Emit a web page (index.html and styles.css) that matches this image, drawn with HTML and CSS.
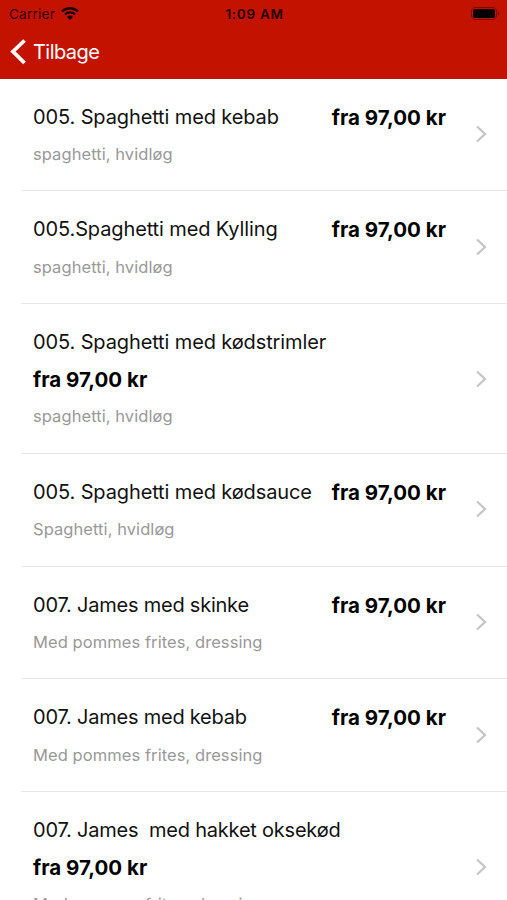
FILE: index.html
```html
<!DOCTYPE html>
<html lang="da">
<head>
<meta charset="utf-8">
<title>Menu</title>
<link rel="stylesheet" href="styles.css">
</head>
<body>
<header class="header">
  <div class="status">
    <div class="status-left"><span class="carrier">Carrier</span>
      <svg class="wifi" width="18" height="14" viewBox="0 0 18 14"><path d="M1 4.500a11.500 11.500 0 0 1 16 0" /><path d="M3.900 7.500a7.300 7.300 0 0 1 10.200 0"/><path class="solid" d="M9 13L6 9.900a4.400 4.400 0 0 1 6 0z"/></svg>
    </div>
    <span class="time">1:09 AM</span>
    <svg class="battery" width="29" height="13" viewBox="0 0 29 13"><rect class="shell" x=".5" y=".5" width="25" height="12" rx="3.500"/><rect x="2" y="2" width="22" height="9" rx="2"/><path class="tip" d="M27 4.500c2 .8 2 3.200 0 4z"/></svg>
  </div>
  <nav class="nav">
    <svg class="back" width="16" height="26" viewBox="0 0 16 26"><path d="M14.500 1.500L3 12.500l11.500 11.500"/></svg>
    <span class="back-label">Tilbage</span>
  </nav>
</header>
<main class="list">
  <article class="item"><div class="info"><div class="row"><h2>005. Spaghetti med kebab</h2><b class="price">fra 97,00 kr</b></div><p>spaghetti, hvidløg</p></div><svg class="chevron" viewBox="0 0 12 18"><path d="M2 1.500l8 7.500-8 7.500"/></svg></article>
  <article class="item"><div class="info"><div class="row"><h2>005.Spaghetti med Kylling</h2><b class="price">fra 97,00 kr</b></div><p>spaghetti, hvidløg</p></div><svg class="chevron" viewBox="0 0 12 18"><path d="M2 1.500l8 7.500-8 7.500"/></svg></article>
  <article class="item tall"><div class="info"><h2>005. Spaghetti med kødstrimler</h2><b class="price">fra 97,00 kr</b><p>spaghetti, hvidløg</p></div><svg class="chevron" viewBox="0 0 12 18"><path d="M2 1.500l8 7.500-8 7.500"/></svg></article>
  <article class="item"><div class="info"><div class="row"><h2>005. Spaghetti med kødsauce</h2><b class="price">fra 97,00 kr</b></div><p>Spaghetti, hvidløg</p></div><svg class="chevron" viewBox="0 0 12 18"><path d="M2 1.500l8 7.500-8 7.500"/></svg></article>
  <article class="item"><div class="info"><div class="row"><h2 class="snug">007. James med skinke</h2><b class="price">fra 97,00 kr</b></div><p>Med pommes frites, dressing</p></div><svg class="chevron" viewBox="0 0 12 18"><path d="M2 1.500l8 7.500-8 7.500"/></svg></article>
  <article class="item"><div class="info"><div class="row"><h2 class="snug">007. James med kebab</h2><b class="price">fra 97,00 kr</b></div><p>Med pommes frites, dressing</p></div><svg class="chevron" viewBox="0 0 12 18"><path d="M2 1.500l8 7.500-8 7.500"/></svg></article>
  <article class="item tall"><div class="info"><h2 class="snug">007. James&nbsp; med hakket oksekød</h2><b class="price">fra 97,00 kr</b><p>Med pommes frites, dressing</p></div><svg class="chevron" viewBox="0 0 12 18"><path d="M2 1.500l8 7.500-8 7.500"/></svg></article>
</main>
</body>
</html>
```
FILE: styles.css
```css
* { box-sizing: border-box; }
html { overflow: hidden; }
body { margin: 0; height: 900px; overflow: hidden; background: #fff; font-family: Inter, "Liberation Sans", sans-serif; }
.header { height: 78.600px; background: #c41200; }
.status { height: 27px; padding: 0 7px 0 9px; display: grid; grid-template-columns: 1fr auto 1fr; align-items: center; color: #300400; font-size: 13.5px; }
.status-left { display: flex; align-items: center; gap: 6px; }
.carrier { letter-spacing: .25px; }
.time { font-weight: 600; letter-spacing: .7px; color: #1c0200; }
.wifi { fill: none; stroke: #180200; stroke-width: 2.4; }
.wifi .solid { fill: #180200; stroke: none; }
.battery { justify-self: end; fill: #000; }
.battery .shell { fill: none; stroke: #7c0b00; }
.battery .tip { fill: #7c0b00; }
.nav { height: 50px; padding-left: 10px; display: flex; align-items: center; gap: 7px; color: #fff; font-size: 20px; }
.back { fill: none; stroke: #fff; stroke-width: 3.8; }
.back-label { letter-spacing: -.55px; }
.item { height: 112.750px; margin-left: 21px; padding: 25px 20px 0 12px; display: flex; border-bottom: 1px solid #e6e6e6; }
.tall { height: 149.700px; }
.info { flex: 1; }
.row { display: flex; width: 413px; justify-content: space-between; }
h2, .price, p { margin: 0; white-space: nowrap; }
h2 { font-size: 20px; line-height: 27px; font-weight: 400; color: #111; letter-spacing: -.12px; }
.snug { letter-spacing: -.22px; }
.price { display: block; font-size: 20.500px; line-height: 28px; font-weight: 650; color: #000; letter-spacing: 0; }
.tall .price { margin-top: 10px; }
p { margin-top: 10.500px; font-size: 16.500px; line-height: 24px; color: #999; letter-spacing: .07px; }
.tall p { margin-top: 9.500px; }
.chevron { width: 12px; height: 18px; margin-top: 21.500px; flex: none; fill: none; stroke: #c4c4c6; stroke-width: 2.2; }
.tall .chevron { margin-top: 40.500px; }
```
